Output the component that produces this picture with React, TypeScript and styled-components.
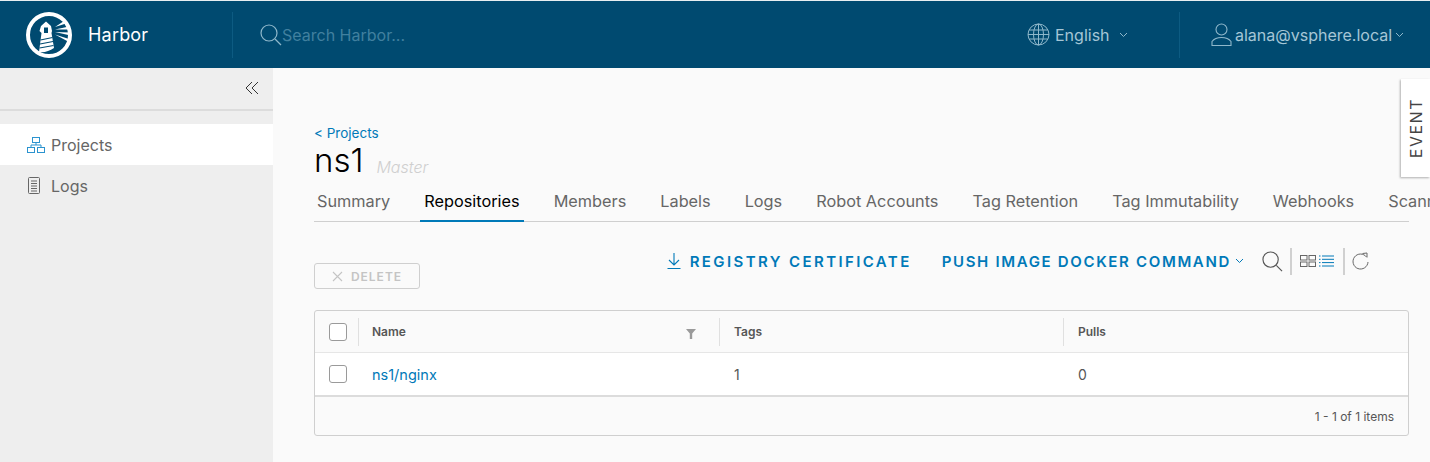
import React from "react"
import styled, { createGlobalStyle } from "styled-components"

const GlobalStyle = createGlobalStyle`
  html, body {
    margin: 0;
    padding: 0;
    background: #fafafa;
    font-family: "Inter", "Noto Sans", sans-serif;
    overflow: hidden;
  }
  * { box-sizing: border-box; }
`

const tabs = [
  "Summary",
  "Repositories",
  "Members",
  "Labels",
  "Logs",
  "Robot Accounts",
  "Tag Retention",
  "Tag Immutability",
  "Webhooks",
  "Scanner",
]

const Logo = () => (
  <svg width="48" height="48" viewBox="0 0 48 48">
    <circle cx="24" cy="24" r="21" fill="none" stroke="#fff" strokeWidth="4" />
    <path d="M14.500 20 L16 15 L21 10.500 L26 15 L27 20 L26.500 22 L29 37 Q22 42 14 41 L16.500 22 Z" fill="#fff" />
    <rect x="19" y="16.500" width="4" height="5.500" fill="#004a70" />
    <path d="M15.500 29 L27.500 26.500 M15 33 L28 30.500 M14.500 37 L28.500 34.500" stroke="#004a70" strokeWidth="1.100" />
    <path d="M30 16 L39 10 L41 12.500 Z M30 18.500 L44 15.500 L45 18.500 Z M30 21 L45.500 21.500 L45.500 24.500 Z M30 23.500 L44 28 L43 30.500 Z" fill="#fff" />
  </svg>
)

const SearchIcon = ({ size, color }: { size: number; color: string }) => (
  <svg width={size} height={size} viewBox="0 0 22 22" fill="none" stroke={color} strokeWidth="1.200">
    <circle cx="9" cy="9" r="8" />
    <path d="M15 15 L21 21" />
  </svg>
)

const Chevron = ({ color }: { color: string }) => (
  <svg width="9" height="6" viewBox="0 0 9 6" fill="none" stroke={color} strokeWidth="1">
    <path d="M1 1 L4.500 4.500 L8 1" />
  </svg>
)

const GlobeIcon = () => (
  <svg width="23" height="23" viewBox="0 0 23 23" fill="none" stroke="#8fb8cb" strokeWidth="1">
    <circle cx="11.500" cy="11.500" r="10.500" />
    <ellipse cx="11.500" cy="11.500" rx="5" ry="10.500" />
    <path d="M11.500 1 V22 M2 7 H21 M1 11.500 H22 M2 16 H21" />
  </svg>
)

const UserIcon = () => (
  <svg width="21" height="24" viewBox="0 0 21 24" fill="none" stroke="#8fb8cb" strokeWidth="1.100">
    <circle cx="10.500" cy="6.500" r="5.500" />
    <path d="M1 22.500 V18.500 Q4 14.500 10.500 14.500 Q17 14.500 20 18.500 V22.500 Z" />
  </svg>
)

const ProjectsIcon = () => (
  <svg width="18" height="16" viewBox="0 0 18 16" fill="none" stroke="#2b93cf" strokeWidth="1">
    <rect x="5.500" y="0.500" width="7" height="5" />
    <rect x="0.500" y="10.500" width="7" height="5" />
    <rect x="10.500" y="10.500" width="7" height="5" />
    <path d="M9 5.500 V8 M4 10.500 V8 H14 V10.500" />
  </svg>
)

const LogsIcon = () => (
  <svg width="14" height="17" viewBox="0 0 14 17" fill="none" stroke="#666" strokeWidth="1">
    <rect x="1.500" y="0.500" width="11" height="16" rx="1" />
    <path d="M4 4 H10 M4 6.500 H10 M4 9 H10 M4 11.500 H10 M4 14 H10" />
  </svg>
)

const CollapseIcon = () => (
  <svg width="14" height="14" viewBox="0 0 14 14" fill="none" stroke="#333" strokeWidth="1">
    <path d="M7 1 L1 7 L7 13 M13 1 L7 7 L13 13" />
  </svg>
)

const CloseIcon = () => (
  <svg width="11" height="11" viewBox="0 0 11 11" fill="none" stroke="#c4c4c4" strokeWidth="1.100">
    <path d="M1 1 L10 10 M10 1 L1 10" />
  </svg>
)

const DownloadIcon = () => (
  <svg width="14" height="16" viewBox="0 0 14 16" fill="none" stroke="#0079b8" strokeWidth="1.100">
    <path d="M7 0 V11.500 M2 7 L7 12 L12 7 M0.500 15.500 H13.500" />
  </svg>
)

const CardViewIcon = () => (
  <svg width="16" height="12" viewBox="0 0 16 12" fill="none" stroke="#666" strokeWidth="1">
    <rect x="0.500" y="0.500" width="6.500" height="4.500" />
    <rect x="9" y="0.500" width="6.500" height="4.500" />
    <rect x="0.500" y="7" width="6.500" height="4.500" />
    <rect x="9" y="7" width="6.500" height="4.500" />
  </svg>
)

const ListViewIcon = () => (
  <svg width="15" height="12" viewBox="0 0 15 12" fill="none" stroke="#0079b8" strokeWidth="1">
    <path d="M0 1 H1.500 M3 1 H15 M0 4.300 H1.500 M3 4.300 H15 M0 7.600 H1.500 M3 7.600 H15 M0 11 H1.500 M3 11 H15" />
  </svg>
)

const RefreshIcon = () => (
  <svg width="17" height="18" viewBox="0 0 17 18" fill="none" stroke="#666" strokeWidth="1">
    <path d="M14.500 5 A7.500 7.500 0 1 0 16 10" />
    <path d="M10.500 1.500 L15 1 V5.500" />
  </svg>
)

const FilterIcon = () => (
  <svg width="10" height="10" viewBox="0 0 10 10">
    <path d="M0 0 H10 L6.200 4.500 V10 H3.800 V4.500 Z" fill="#9a9a9a" />
  </svg>
)

const App = () => {
  return (
    <Page>
      <GlobalStyle />
      <Header>
        <Brand>
          <Logo />
          <BrandName>Harbor</BrandName>
        </Brand>
        <SearchBox>
          <SearchIcon size={22} color="#8fb8cb" />
          <SearchPlaceholder>Search Harbor...</SearchPlaceholder>
        </SearchBox>
        <LanguageMenu>
          <GlobeIcon />
          <HeaderLabel>English</HeaderLabel>
          <LanguageChevron>
            <Chevron color="#8fb8cb" />
          </LanguageChevron>
        </LanguageMenu>
        <UserMenu>
          <UserIcon />
          <HeaderLabel>alana@vsphere.local</HeaderLabel>
          <Chevron color="#8fb8cb" />
        </UserMenu>
      </Header>
      <Body>
        <Sidebar>
          <CollapseBar>
            <CollapseIcon />
          </CollapseBar>
          <NavList>
            <NavItem $active>
              <ProjectsIcon />
              Projects
            </NavItem>
            <NavItem>
              <LogsIconSlot>
                <LogsIcon />
              </LogsIconSlot>
              Logs
            </NavItem>
          </NavList>
        </Sidebar>
        <Main>
          <BackLink>&lt; Projects</BackLink>
          <TitleRow>
            <Title>ns1</Title>
            <Role>Master</Role>
          </TitleRow>
          <TabBar>
            {tabs.map(tab => (
              <Tab key={tab} $active={tab === "Repositories"}>
                {tab}
              </Tab>
            ))}
          </TabBar>
          <Toolbar>
            <DeleteButton>
              <CloseIcon />
              DELETE
            </DeleteButton>
            <Actions>
              <ActionLink>
                <DownloadIcon />
                REGISTRY CERTIFICATE
              </ActionLink>
              <PushLink>
                PUSH IMAGE DOCKER COMMAND
                <Chevron color="#0079b8" />
              </PushLink>
              <ToolIcons>
                <SearchIcon size={21} color="#555" />
                <ToolDivider />
                <ViewIcons>
                  <CardViewIcon />
                  <ListViewIcon />
                </ViewIcons>
                <ToolDivider />
                <RefreshIcon />
              </ToolIcons>
            </Actions>
          </Toolbar>
          <Table>
            <HeadRow>
              <CheckCell>
                <Checkbox />
              </CheckCell>
              <NameHead>
                Name
                <FilterSlot>
                  <FilterIcon />
                </FilterSlot>
              </NameHead>
              <HeadCell>Tags</HeadCell>
              <HeadCell>Pulls</HeadCell>
            </HeadRow>
            <DataRow>
              <DataCheckCell>
                <Checkbox />
              </DataCheckCell>
              <NameCell>
                <RepoLink>ns1/nginx</RepoLink>
              </NameCell>
              <DataCell>1</DataCell>
              <DataCell>0</DataCell>
            </DataRow>
            <TableFooter>1 - 1 of 1 items</TableFooter>
          </Table>
        </Main>
      </Body>
      <EventTab>
        <EventLabel>EVENT</EventLabel>
      </EventTab>
    </Page>
  )
}

const Page = styled.div`
  position: relative;
  width: 1430px;
  height: 462px;
  overflow: hidden;
  background: #fafafa;
`
const Header = styled.header`
  display: flex;
  align-items: center;
  height: 68px;
  background: #004a70;
  border-top: 1px solid #e8eef1;
`
const Brand = styled.div`
  display: flex;
  align-items: center;
  gap: 15px;
  width: 233px;
  height: 46px;
  padding-left: 25px;
  border-right: 1px solid #0d5b82;
`
const BrandName = styled.span`
  color: #fff;
  font-size: 18px;
  letter-spacing: 0.2px;
`
const SearchBox = styled.div`
  display: flex;
  align-items: center;
  width: 794px;
  padding-left: 27px;
`
const SearchPlaceholder = styled.span`
  color: #41809f;
  font-size: 16px;
`
const HeaderLabel = styled.span`
  color: #a5c6d6;
  font-size: 16px;
  white-space: nowrap;
`
const LanguageMenu = styled.div`
  display: flex;
  align-items: center;
  gap: 5px;
  width: 153px;
  height: 46px;
  border-right: 1px solid #0d5b82;
`
const LanguageChevron = styled.span`
  display: flex;
  margin-left: 4px;
`
const UserMenu = styled.div`
  display: flex;
  align-items: center;
  gap: 3px;
  padding-left: 31px;
`
const Body = styled.div`
  display: grid;
  grid-template-columns: 273px 1fr;
  height: 394px;
`
const Sidebar = styled.aside`
  background: #eeeeee;
`
const CollapseBar = styled.div`
  display: flex;
  align-items: center;
  justify-content: flex-end;
  height: 43px;
  padding: 0 14px 1px 0;
  border-bottom: 2px solid #dcdcdc;
`
const NavList = styled.nav`
  padding-top: 13px;
`
const NavItem = styled.div<{ $active?: boolean }>`
  display: flex;
  align-items: center;
  gap: 6px;
  height: 41px;
  padding-left: 27px;
  font-size: 16px;
  color: #666;
  background: ${props => (props.$active ? "#fff" : "transparent")};
`
const LogsIconSlot = styled.span`
  display: flex;
  width: 18px;
`
const Main = styled.main`
  padding: 57px 21px 0 41px;
  min-width: 0;
`
const BackLink = styled.div`
  color: #0079b8;
  font-size: 13.500px;
  line-height: 16px;
`
const TitleRow = styled.div`
  display: flex;
  align-items: flex-end;
  height: 38px;
`
const Title = styled.h1`
  margin: 0;
  color: #000;
  font-size: 33px;
  font-weight: 300;
  line-height: 38px;
`
const Role = styled.span`
  margin-left: 13px;
  padding-bottom: 2px;
  color: #cfcfcf;
  font-size: 16px;
  font-style: italic;
  font-weight: 300;
  line-height: 20px;
`
const TabBar = styled.div`
  display: flex;
  gap: 26px;
  height: 33px;
  margin-top: 10px;
  border-bottom: 1px solid #cfcfcf;
  white-space: nowrap;
`
const Tab = styled.div<{ $active?: boolean }>`
  flex: none;
  height: 33px;
  padding: 0 4px;
  color: ${props => (props.$active ? "#000" : "#666")};
  font-size: 16.300px;
  line-height: 24px;
  border-bottom: ${props => (props.$active ? "2px solid #0079b8" : "none")};
  &:first-child {
    margin-left: -1px;
  }
`
const Toolbar = styled.div`
  display: flex;
  align-items: flex-start;
  justify-content: space-between;
  height: 88px;
`
const DeleteButton = styled.button`
  display: flex;
  align-items: center;
  justify-content: center;
  gap: 8px;
  width: 106px;
  height: 26px;
  margin-top: 41px;
  padding: 0;
  background: transparent;
  border: 1px solid #cfcfcf;
  border-radius: 3px;
  color: #c4c4c4;
  font-family: inherit;
  font-size: 12px;
  font-weight: 600;
  letter-spacing: 1px;
`
const Actions = styled.div`
  display: flex;
  align-items: center;
  height: 26px;
  margin-top: 26px;
`
const ActionLink = styled.div`
  display: flex;
  align-items: center;
  gap: 9px;
  color: #0079b8;
  font-size: 15px;
  font-weight: 600;
  letter-spacing: 2.400px;
  white-space: nowrap;
`
const PushLink = styled(ActionLink)`
  gap: 4px;
  margin-left: 30px;
  letter-spacing: 1.660px;
`
const ToolIcons = styled.div`
  display: flex;
  align-items: center;
  gap: 7px;
  margin-left: 18px;
  margin-right: 40px;
`
const ToolDivider = styled.span`
  width: 2px;
  height: 27px;
  background: #d0d0d0;
`
const ViewIcons = styled.span`
  display: flex;
  gap: 3px;
  margin: 0 2px 0 1px;
`
const Table = styled.div`
  border: 1px solid #cfcfcf;
  border-radius: 3px;
  color: #565656;
`
const columns = "44px 361px 344px 1fr"
const HeadRow = styled.div`
  display: grid;
  grid-template-columns: ${columns};
  align-items: center;
  height: 42px;
  border-bottom: 1px solid #e6e6e6;
`
const CheckCell = styled.div`
  display: flex;
  align-items: center;
  height: 28px;
  padding-left: 14px;
  border-right: 1px solid #e0e0e0;
`
const HeadCell = styled.div`
  display: flex;
  align-items: center;
  justify-content: space-between;
  height: 28px;
  padding: 0 23px 0 14px;
  border-right: 1px solid #e0e0e0;
  font-size: 12px;
  font-weight: 600;
  &:last-child {
    border-right: none;
  }
`
const NameHead = styled(HeadCell)`
  padding-left: 13px;
`
const FilterSlot = styled.span`
  display: flex;
  margin-top: 4px;
`
const Checkbox = styled.span`
  display: block;
  width: 18px;
  height: 18px;
  border: 1px solid #9a9a9a;
  border-radius: 3px;
  background: #fff;
`
const DataRow = styled.div`
  display: grid;
  grid-template-columns: ${columns};
  align-items: center;
  height: 44px;
  background: #fff;
  border-bottom: 2px solid #dcdcdc;
`
const DataCheckCell = styled.div`
  padding-left: 14px;
`
const DataCell = styled.div`
  padding: 1px 0 0 14px;
  font-size: 14px;
  color: #565656;
`
const NameCell = styled(DataCell)`
  padding-left: 13px;
  font-size: 14.500px;
`
const RepoLink = styled.span`
  color: #0079b8;
`
const TableFooter = styled.div`
  height: 38px;
  padding-right: 14px;
  color: #565656;
  font-size: 12px;
  line-height: 40px;
  text-align: right;
`
const EventTab = styled.div`
  position: absolute;
  top: 79px;
  right: 0;
  display: flex;
  align-items: center;
  justify-content: center;
  width: 29px;
  height: 98px;
  background: #fff;
  box-shadow: -1px 1px 2px rgba(0, 0, 0, 0.3);
`
const EventLabel = styled.span`
  color: #444;
  font-size: 16px;
  letter-spacing: 1.500px;
  writing-mode: vertical-rl;
  transform: rotate(180deg);
`

export default App
